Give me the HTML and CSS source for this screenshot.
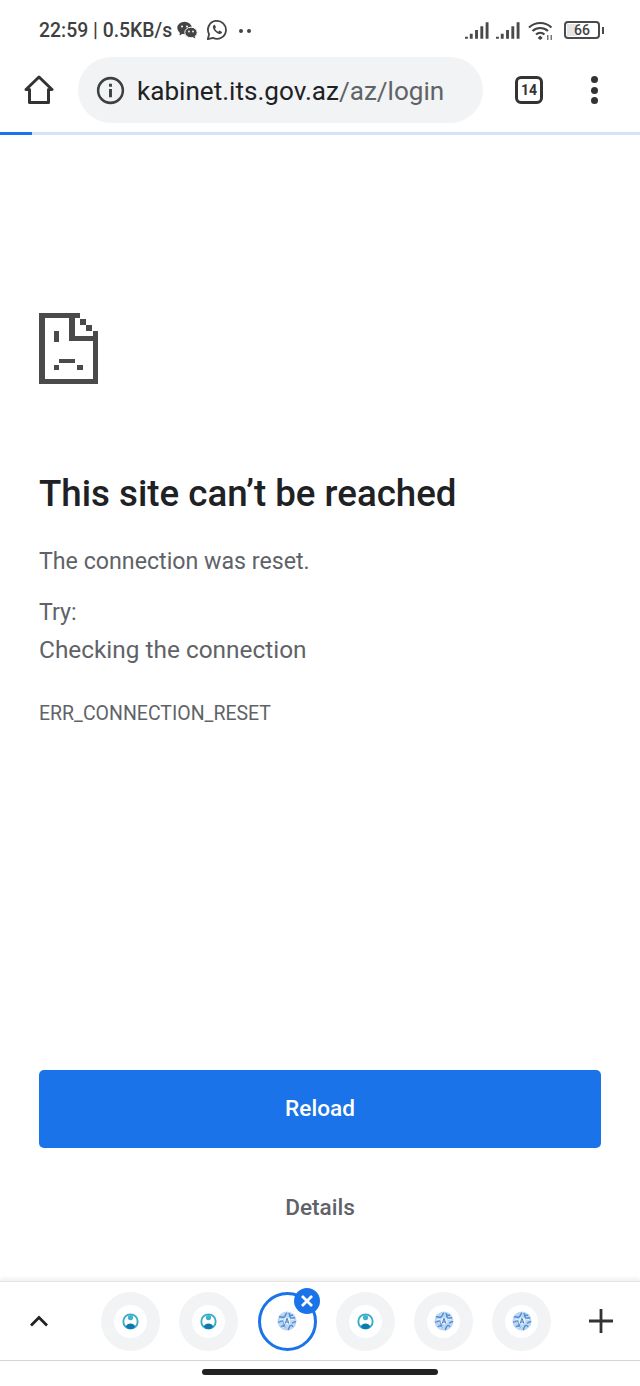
FILE: index.html
```html
<!DOCTYPE html>
<html lang="en">
<head>
    <meta charset="UTF-8">
    <meta name="viewport" content="width=device-width, initial-scale=1.0">
    <title>This site can't be reached</title>
    <link rel="stylesheet" href="styles.css">
</head>
<body>
    <svg class="defs" width="0" height="0">
        <defs>
            <symbol id="fav-user" viewBox="0 0 18 18">
                <circle cx="9" cy="9" r="7.600" fill="#fff" stroke="#38adc9" stroke-width="2"/>
                <circle cx="9" cy="4.800" r="2.800" fill="#3fb3cc"/>
                <path d="M4 14.200c.8-2.200 2.700-3.200 5-3.200s4.200 1 5 3.200c-1.200 1.700-3 2.800-5 2.800s-3.800-1.100-5-2.800z" fill="#0f78ac"/>
            </symbol>
            <symbol id="fav-globe" viewBox="0 0 20 20">
                <circle cx="10" cy="10" r="9.500" fill="#bdd5ef"/>
                <path d="M2 6c2-1 3 1 5 0s1-3 3-4M1 11c2 1 3-2 5-1s0 4 2 5M4 16c1-2 3-1 4 1M12 2c0 2 2 3 4 2M18 7c-2-1-3 1-4 0s-1-2-2-2M19 11c-2-1-2 1-4 1M16 16c-1-2-2-2-3-1s-1 3-2 4" fill="none" stroke="#4d8ed8" stroke-width="1.400"/>
                <path d="M3 8.500c1 0 2 .5 3 0M14 8c1 .5 2 1 3 .5M6 17c1-.5 1-1 2-1" fill="none" stroke="#fff" stroke-width=".8"/>
                <circle cx="10" cy="10" r="3.500" fill="#e4eef9"/>
                <path d="M8.200 12.500l1.800-5.200 1.800 5.200M9 11h2" fill="none" stroke="#4a7fbd" stroke-width="1"/>
            </symbol>
        </defs>
    </svg>

    <div class="status-bar">
        <span class="status-text">22:59 | 0.5KB/s</span>
        <svg class="ic-wechat" viewBox="0 0 21 18" width="21" height="18">
            <ellipse cx="7.500" cy="7" rx="7.200" ry="6.200" fill="#444"/>
            <path d="M3 11l-.5 3.500 3.500-2z" fill="#444"/>
            <ellipse cx="14" cy="11.500" rx="6.200" ry="5.300" fill="#444" stroke="#fff" stroke-width="1"/>
            <path d="M17.500 15l1 2.500-3-1.500z" fill="#444"/>
            <circle cx="5" cy="5.500" r="1" fill="#fff"/><circle cx="10" cy="5.500" r="1" fill="#fff"/>
            <circle cx="12" cy="10.500" r=".9" fill="#fff"/><circle cx="16" cy="10.500" r=".9" fill="#fff"/>
        </svg>
        <svg class="ic-whatsapp" viewBox="0 0 22 22" width="22" height="22">
            <path d="M1.800 20.200l1.300-5A9 9 0 1 1 7 18.900z" fill="none" stroke="#444" stroke-width="1.800" stroke-linejoin="round"/>
            <path d="M8 6c-.8.500-1.300 1.500-1 2.800.600 2.700 3.400 5.500 6 6.100 1.300.300 2.400-.200 2.900-1.100.300-.500.200-.900-.200-1.100l-1.900-1c-.400-.200-.700-.100-.900.200l-.600.800c-1.400-.500-2.700-1.800-3.300-3.200l.700-.700c.200-.300.300-.600.100-.900l-.800-1.800c-.200-.400-.600-.400-1-.100z" fill="#444"/>
        </svg>
        <span class="status-dots"><i></i><i></i></span>
        <div class="status-right">
            <svg viewBox="0 0 25 17" width="24" height="17">
                <path d="M0 15h3v2H0zM5 12h3v5H5zM10.500 8h3v9h-3zM16 4h3v13h-3zM21.500 0h3v17h-3z" fill="#4a4a4a"/>
            </svg>
            <svg viewBox="0 0 25 17" width="24" height="17">
                <path d="M0 15h3v2H0zM5 12h3v5H5zM10.500 8h3v9h-3zM16 4h3v13h-3zM21.500 0h3v17h-3z" fill="#4a4a4a"/>
            </svg>
            <svg viewBox="0 0 26 20" width="26" height="20">
                <path d="M1 7.500c6.500-6 16-6 22.500 0M4.500 11c4.500-4 11-4 15.500 0M8 14.500c2.500-2.200 6-2.200 8.500 0" fill="none" stroke="#444" stroke-width="2.200"/>
                <path d="M12.200 15.500l2.500 2.500-2.500 2-2.500-2z" fill="#444"/>
                <path d="M19 15h1.500v5H19zM22.500 15H24v5h-1.500z" fill="#777"/>
            </svg>
            <div class="battery">
                <div class="battery-body"><span class="battery-fill"></span><span class="battery-num">66</span></div>
                <span class="battery-tip"></span>
            </div>
        </div>
    </div>

    <div class="toolbar">
        <svg class="ic-home" viewBox="0 0 30 30" width="30" height="30">
            <path d="M2 14.500L15 2l13 12.500h-3.500V27.500h-19V14.500z" fill="none" stroke="#333" stroke-width="3" stroke-linejoin="round"/>
        </svg>
        <div class="url-pill">
            <svg class="ic-info" viewBox="0 0 30 30" width="29" height="29">
                <circle cx="15" cy="15" r="12.800" fill="none" stroke="#3c4043" stroke-width="2.600"/>
                <path d="M13.500 13.500h3v8.500h-3zM13.500 8h3v3h-3z" fill="#3c4043"/>
            </svg>
            <span class="url"><span class="url-host">kabinet.its.gov.az</span>/az/login</span>
        </div>
        <div class="tab-count">14</div>
        <div class="menu-dots"><i></i><i></i><i></i></div>
    </div>
    <div class="progress"><div class="progress-done"></div></div>

    <main class="error-page">
        <svg class="sad-file" viewBox="0 0 59 71" width="59" height="71" shape-rendering="crispEdges">
            <path fill="#4a4a4a" d="M0 0h41v5H6v61h48V18h5v53H0z"/>
            <path fill="#4a4a4a" d="M30 5h6v18h23v5H30z"/>
            <path fill="#4a4a4a" d="M41 6h6v6h-6zM47 12h6v6h-6z"/>
            <path fill="#4a4a4a" d="M15 18h5v11h-5zM20 46h16v4H20zM15 52h5v5h-5zM38 52h6v5h-6z"/>
        </svg>
        <h1 class="error-title">This site can’t be reached</h1>
        <p class="error-msg">The connection was reset.</p>
        <p class="error-try">Try:</p>
        <p class="error-hint">Checking the connection</p>
        <p class="error-code">ERR_CONNECTION_RESET</p>
        <div class="spacer"></div>
        <button class="btn-reload">Reload</button>
        <div class="btn-details">Details</div>
    </main>

    <div class="tab-strip">
        <svg class="ic-up" viewBox="0 0 20 12" width="20" height="12">
            <path d="M2 10.500l8-8 8 8" fill="none" stroke="#222" stroke-width="2.800"/>
        </svg>
        <div class="tabs">
            <div class="tab"><span class="tab-inner"><svg width="17" height="17"><use href="#fav-user"/></svg></span></div>
            <div class="tab"><span class="tab-inner"><svg width="17" height="17"><use href="#fav-user"/></svg></span></div>
            <div class="tab tab-active">
                <svg width="20" height="20"><use href="#fav-globe"/></svg>
                <span class="tab-close">
                    <svg viewBox="0 0 14 14" width="14" height="14"><path d="M2 2l10 10M12 2L2 12" stroke="#fff" stroke-width="2.800"/></svg>
                </span>
            </div>
            <div class="tab"><span class="tab-inner"><svg width="17" height="17"><use href="#fav-user"/></svg></span></div>
            <div class="tab"><span class="tab-inner"><svg width="20" height="20"><use href="#fav-globe"/></svg></span></div>
            <div class="tab"><span class="tab-inner"><svg width="20" height="20"><use href="#fav-globe"/></svg></span></div>
        </div>
        <svg class="ic-plus" viewBox="0 0 24 24" width="24" height="24">
            <path d="M12 0v24M0 12h24" stroke="#333" stroke-width="2.800"/>
        </svg>
    </div>
    <div class="nav-bar"><div class="home-pill"></div></div>
</body>
</html>
```

FILE: styles.css
```css
* { box-sizing: border-box; }
html, body { margin: 0; padding: 0; }
body { width: 640px; height: 1386px; overflow: hidden; display: flex; flex-direction: column; background-color: #fff; font-family: Roboto, sans-serif; color: #202124; }
.defs { position: absolute; }

/* status bar */
.status-bar { height: 57px; padding: 19px 36px 0 39px; display: flex; align-items: flex-start; flex-shrink: 0; }
.status-text { font-size: 19.4px; font-weight: 500; line-height: 23px; color: #3f3f3f; }
.ic-wechat { margin: 2px 0 0 5px; }
.ic-whatsapp { margin: 0 0 0 8px; }
.status-dots { display: flex; gap: 4px; margin: 10px 0 0 11px; }
.status-dots i { width: 4px; height: 4px; border-radius: 50%; background-color: #444; }
.status-right { margin-left: auto; display: flex; align-items: flex-start; gap: 7px; padding-top: 3px; }
.status-right svg:nth-child(3) { margin: -2px 0 0 1px; }
.battery { display: flex; align-items: center; margin-left: 3px; margin-top: -1px; }
.battery-body { position: relative; width: 36px; height: 18px; border: 2px solid #4a4a4a; border-radius: 4px; display: flex; align-items: center; justify-content: center; }
.battery-fill { position: absolute; left: 1px; top: 1px; bottom: 1px; width: 30%; background-color: #e4e4e4; }
.battery-num { position: relative; font-size: 14px; font-weight: 500; color: #444; }
.battery-tip { width: 2px; height: 7px; background-color: #4a4a4a; margin-left: 2px; }

/* toolbar */
.toolbar { height: 66px; display: flex; align-items: center; flex-shrink: 0; margin-bottom: 9px; }
.ic-home { margin-left: 24px; flex-shrink: 0; }
.url-pill { width: 405px; height: 66px; margin-left: 24px; border-radius: 33px; background-color: #f1f3f4; display: flex; align-items: center; padding-left: 18px; }
.ic-info { flex-shrink: 0; }
.url { margin: 2px 0 0 12px; font-size: 26.100px; color: #5f6368; white-space: nowrap; }
.url-host { color: #202124; }
.tab-count { width: 28px; height: 28px; margin-left: 32px; border: 3px solid #333; border-radius: 6px; font-size: 14px; font-weight: 700; color: #333; display: flex; align-items: center; justify-content: center; }
.menu-dots { margin-left: 48px; display: flex; flex-direction: column; gap: 3.500px; }
.menu-dots i { width: 7px; height: 7px; border-radius: 50%; background-color: #333; }

.progress { height: 3px; background-color: #d2e3fc; flex-shrink: 0; }
.progress-done { width: 32px; height: 3px; background-color: #1a73e8; }

/* error content */
.error-page { flex: 1; display: flex; flex-direction: column; padding: 178px 39px 0; }
.sad-file { flex-shrink: 0; }
.error-title { margin: 87px 0 0; font-size: 36.700px; font-weight: 500; line-height: 46px; color: #202124; }
.error-msg { margin: 31px 0 0; font-size: 23.200px; line-height: 26px; color: #5f6368; }
.error-try { margin: 25px 0 0; font-size: 23.200px; line-height: 26px; color: #5f6368; }
.error-hint { margin: 12px 0 0; font-size: 24.400px; line-height: 26px; color: #5f6368; }
.error-code { margin: 40px 0 0; font-size: 19.500px; line-height: 22px; color: #5f6368; }
.spacer { flex: 1; }
.btn-reload { width: 562px; height: 78px; padding: 0 0 2px; border: none; border-radius: 5px; background-color: #1a73e8; color: #fff; font-family: Roboto, sans-serif; font-size: 22.600px; font-weight: 500; flex-shrink: 0; }
.btn-details { margin: 47px 0 60px; text-align: center; font-size: 22.600px; font-weight: 500; line-height: 26px; color: #5f6368; }

/* tab strip */
.tab-strip { height: 80px; flex-shrink: 0; display: flex; align-items: center; border-top: 1px solid #e4e4e4; border-bottom: 1px solid #d5d5d5; box-shadow: 0 -3px 4px rgba(0, 0, 0, .06); }
.ic-up { margin-left: 29px; flex-shrink: 0; }
.tabs { display: flex; gap: 19.300px; margin-left: 52px; }
.tab { position: relative; width: 59px; height: 59px; border-radius: 50%; background-color: #f1f3f4; display: flex; align-items: center; justify-content: center; }
.tab-inner { width: 33px; height: 33px; border-radius: 50%; background-color: #fff; display: flex; align-items: center; justify-content: center; }
.tab-active { background-color: #fff; border: 3px solid #1a73e8; }
.tab-close { position: absolute; top: -7px; right: -6px; width: 26px; height: 26px; border-radius: 50%; background-color: #1a73e8; display: flex; align-items: center; justify-content: center; }
.ic-plus { margin-left: 38px; flex-shrink: 0; }

.nav-bar { height: 25px; flex-shrink: 0; padding-top: 8px; display: flex; justify-content: center; }
.home-pill { width: 236px; height: 6px; border-radius: 3px; background-color: #222; }
```
